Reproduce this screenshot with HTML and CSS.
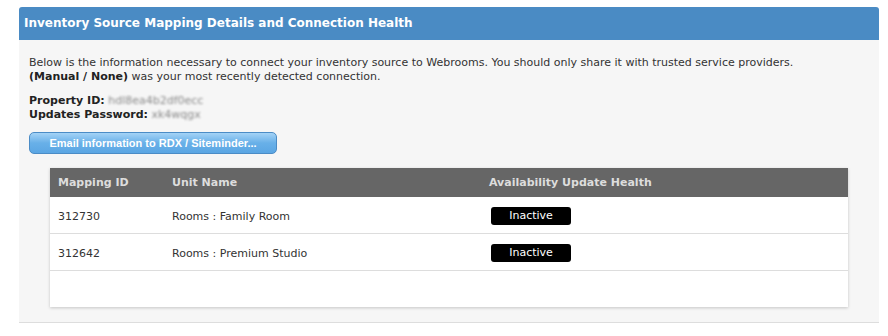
FILE: index.html
```html
<!DOCTYPE html>
<html lang="en">
<head>
  <meta charset="UTF-8" />
  <title>Inventory Source Mapping</title>
  <link rel="stylesheet" href="styles.css">
</head>
<body>
  <div class="panel">
    <div class="panel-head">Inventory Source Mapping Details and Connection Health</div>
    <div class="panel-body">
      <p class="intro">
        Below is the information necessary to connect your inventory source to Webrooms. You should only share it with trusted service providers.<br>
        <b>(Manual / None)</b> was your most recently detected connection.
      </p>
      <p class="creds">
        <b>Property ID:</b> <span class="blur">hdl8ea4b2df0ecc</span><br>
        <b>Updates Password:</b> <span class="blur">xk4wqgx</span>
      </p>
      <button class="email-btn">Email information to RDX / Siteminder...</button>

      <div class="card">
        <table class="map-table">
          <thead>
            <tr>
              <th class="c-id">Mapping ID</th>
              <th class="c-name">Unit Name</th>
              <th>Availability Update Health</th>
            </tr>
          </thead>
          <tbody>
            <tr>
              <td>312730</td>
              <td>Rooms : Family Room</td>
              <td><span class="badge">Inactive</span></td>
            </tr>
            <tr>
              <td>312642</td>
              <td>Rooms : Premium Studio</td>
              <td><span class="badge">Inactive</span></td>
            </tr>
            <tr class="empty">
              <td></td><td></td><td></td>
            </tr>
          </tbody>
        </table>
      </div>
    </div>
  </div>
</body>
</html>
```

FILE: styles.css
```css
body {
  margin: 0;
  padding: 7px 9px 0 19px;
  background: #fff;
  font-family: "DejaVu Sans", Verdana, sans-serif;
  font-size: 11px;
  color: #333;
}
.panel {
  width: 860px;
  background: #f6f6f6;
  border-bottom: 1px solid #ddd;
  border-radius: 3px 3px 0 0;
}
.panel-head {
  height: 33px;
  line-height: 33px;
  padding-left: 5px;
  background: #4a8bc4;
  color: #fff;
  font-weight: bold;
  font-size: 12px;
  border-radius: 3px 3px 0 0;
}
.panel-body {
  padding: 16px 10px 15px 10px;
}
.intro, .creds {
  margin: 0 0 10px 0;
  line-height: 14px;
}
.creds b, .intro b {
  color: #222;
}
.blur {
  color: #8a8a8a;
  filter: blur(1.2px);
}
.email-btn {
  display: block;
  width: 248px;
  height: 22px;
  margin: 0 0 14px 0;
  padding: 0;
  border: 1px solid #4b8cc6;
  border-radius: 5px;
  background: linear-gradient(#a4d3f6, #68b0e8 50%, #5ba6e3);
  color: #fff;
  font-family: "Liberation Sans", Arial, sans-serif;
  font-weight: bold;
  font-size: 11px;
  cursor: pointer;
}
.card {
  margin: 0 21px;
  background: #fff;
  box-shadow: 0 1px 3px rgba(0, 0, 0, 0.2);
}
.map-table {
  width: 100%;
  border-collapse: collapse;
}
.map-table th {
  height: 29px;
  padding: 0 8px;
  background: #666;
  color: #ddd;
  text-align: left;
  font-weight: bold;
}
.map-table td {
  height: 34px;
  padding: 2px 8px 0 8px;
  border-bottom: 1px solid #ddd;
  color: #333;
}
.map-table .empty td {
  border-bottom: none;
}
.c-id {
  width: 98px;
}
.c-name {
  width: 301px;
}
.badge {
  display: inline-block;
  width: 80px;
  height: 18px;
  line-height: 18px;
  margin: 0 0 0 2px;
  background: #000;
  color: #fff;
  text-align: center;
  border-radius: 3px;
}
```
